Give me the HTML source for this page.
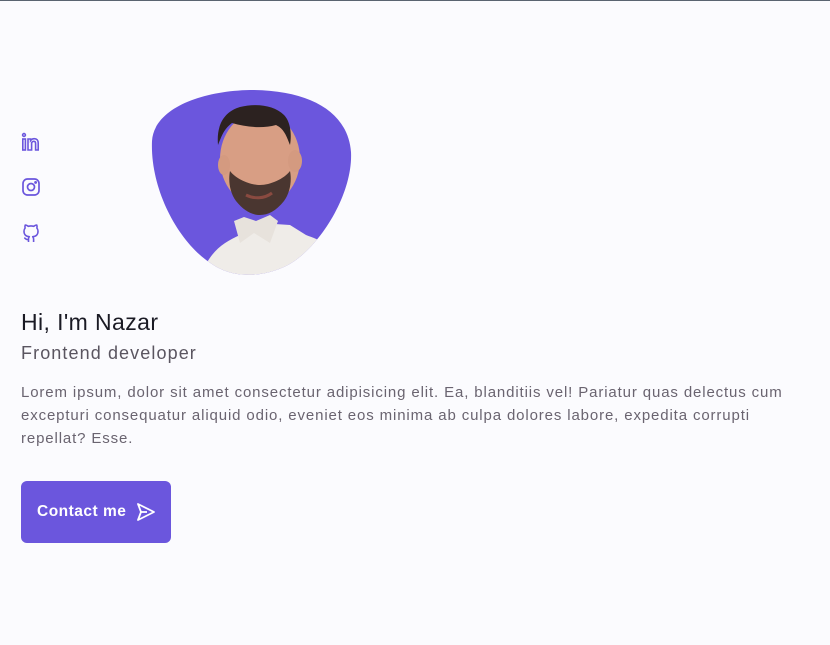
<!DOCTYPE html>
<html><head><style>
body{margin:0;width:830px;height:645px;background:#fbfbfe;font-family:"Liberation Sans",sans-serif;position:relative;overflow:hidden;border-top:1px solid #5a6470;box-sizing:border-box}
.ic{position:absolute;left:21px}
h1{position:absolute;left:21px;top:308px;margin:0;font-weight:400;font-size:23px;color:#1a1a24;letter-spacing:0.4px}
h2{position:absolute;left:21px;top:342px;margin:0;font-weight:400;font-size:18px;color:#5a5560;letter-spacing:1.1px}
p{position:absolute;left:21px;top:380px;margin:0;font-size:15px;line-height:23px;color:#6a6470;white-space:nowrap;letter-spacing:0.87px}
.btn{position:absolute;left:21px;top:480px;width:150px;height:62px;background:#6b56dd;border-radius:6px;color:#fff;font-weight:700;font-size:15.5px;box-sizing:border-box;padding:22px 0 0 16px;letter-spacing:0.5px}
.btn svg{position:absolute;left:115px;top:21px}
</style></head><body>
<svg class="ic" style="top:131px" width="20" height="20" viewBox="0 0 20 20" fill="none" stroke="#6b56dd" stroke-width="1.6"><circle cx="3" cy="3" r="1.4"/><rect x="1.8" y="7" width="2.6" height="11"/><path d="M7 18V7h2.6v1.5c1-1.4 2.4-1.8 3.8-1.8 2.3 0 3.8 1.5 3.8 4.3V18h-2.6v-6.5c0-1.4-.7-2.2-1.8-2.2s-2.2.8-2.2 2.2V18z"/></svg>
<svg class="ic" style="top:176px" width="20" height="20" viewBox="0 0 20 20" fill="none" stroke="#6b56dd" stroke-width="1.7"><rect x="2" y="2" width="16" height="16" rx="4.5"/><circle cx="10" cy="10" r="3.5"/><circle cx="14.6" cy="5.4" r=".6" fill="#6b56dd"/></svg>
<svg class="ic" style="top:222px" width="20" height="20" viewBox="0 0 20 20" fill="none" stroke="#6b56dd" stroke-width="1.6" stroke-linejoin="round"><path d="M7.5 19v-3c-.1-1 .2-1.8.8-2.3-2.8-.3-5.3-1.3-5.3-5.6 0-1.2.4-2.200 1.1-3-.1-.4-.4-1.6.1-3 0 0 1-.3 3.1 1.2a10 10 0 0 1 5.4 0c2.1-1.5 3.1-1.2 3.1-1.2.5 1.4.2 2.6.1 3 .7.8 1.1 1.8 1.1 3 0 4.3-2.5 5.3-5.300 5.6.6.5.9 1.4.9 2.4v2.9"/><path d="M7.5 16.5c-2.5.7-3-1.3-4.3-1.6"/></svg>
<svg style="position:absolute;left:150px;top:88px" width="204" height="190" viewBox="0 0 204 190">
<defs><clipPath id="c"><path d="M2 52C4 20 50 2 100 1c60 0 98 22 101 62 2 40-28 90-58 110-22 14-58 20-84 0C28 152 0 100 2 52z"/></clipPath></defs>
<path d="M2 52C4 20 50 2 100 1c60 0 98 22 101 62 2 40-28 90-58 110-22 14-58 20-84 0C28 152 0 100 2 52z" fill="#6b56dd"/>
<g clip-path="url(#c)">
<path d="M50 190c8-26 22-36 40-44l20-12 30 2 16 10c16 6 36 14 44 26v20z" fill="#efece8"/>
<path d="M84 132l6 22 14-10 16 10 8-22-8-6-14 6-12-4z" fill="#e7e2dc"/>
<ellipse cx="110" cy="70" rx="40" ry="47" fill="#d89e84"/>
<path d="M86 112c-6-8-8-20-6-30 6 8 20 14 30 14s24-6 30-14c2 10 0 22-6 30-8 10-16 14-24 14s-16-4-24-14z" fill="#4a3630"/>
<path d="M68 56c-2-22 8-34 22-38 16-4 34-2 44 8 6 6 8 18 6 30-4-10-6-16-14-20-14 4-30 2-44-2-8 6-10 12-14 22z" fill="#2c2220"/>
<ellipse cx="145" cy="72" rx="7" ry="11" fill="#d49a80"/>
<ellipse cx="74" cy="76" rx="6" ry="10" fill="#d49a80"/>
<path d="M96 106c8 4 18 4 26-2" stroke="#8a4a40" stroke-width="3" fill="none"/>
</g></svg>
<h1>Hi, I'm Nazar</h1>
<h2>Frontend developer</h2>
<p>Lorem ipsum, dolor sit amet consectetur adipisicing elit. Ea, blanditiis vel! Pariatur quas delectus cum<br>excepturi consequatur aliquid odio, eveniet eos minima ab culpa dolores labore, expedita corrupti<br>repellat? Esse.</p>
<div class="btn">Contact me<svg width="20" height="20" viewBox="0 0 20 20" fill="none" stroke="#fff" stroke-width="1.8" stroke-linejoin="round"><path d="M2 2l16 8-16 8 3-8z"/><path d="M5 10h6"/></svg></div>
</body></html>
